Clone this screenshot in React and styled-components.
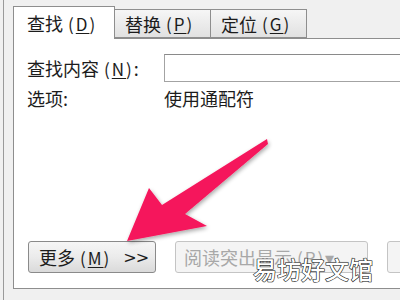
import React from 'react';
import styled, { createGlobalStyle } from 'styled-components';

const Global = createGlobalStyle`
  html, body { margin: 0; padding: 0; }
  body {
    font-family: "Noto Sans CJK SC", "Liberation Sans", sans-serif;
    color: #1c1c1c;
  }
`;

const Screen = styled.div`
  position: relative;
  width: 400px;
  height: 300px;
  overflow: hidden;
  background: #f0f0f0;
  padding-left: 3px;
  box-sizing: border-box;
`;

const Frame = styled.div`
  height: 100%;
  border-left: 1px solid #9a9a9a;
  padding: 5px 0 0 9px;
  box-sizing: border-box;
`;

const TabBar = styled.div`
  display: flex;
  align-items: flex-end;
  height: 33px;
  position: relative;
  z-index: 1;
`;

const Tab = styled.div`
  box-sizing: border-box;
  width: ${p => (p.active ? 102 : 97)}px;
  height: ${p => (p.active ? 33 : 29)}px;
  margin-bottom: ${p => (p.active ? -1 : 0)}px;
  border: 1px solid #8e8e8e;
  border-bottom: ${p => (p.active ? 'none' : '1px solid #8e8e8e')};
  margin-left: ${p => (p.first ? 0 : -1)}px;
  background: ${p => (p.active ? '#fff' : 'linear-gradient(#f6f6f6, #e1e1e1)')};
  display: flex;
  align-items: center;
  padding-left: ${p => (p.active ? 13 : 10)}px;
  font-size: 18px;
  line-height: 1;
  white-space: nowrap;
`;

// the "(D)" access-key part, drawn wider like the old dialog font
const Key = styled.span`
  margin-left: 5px;
  letter-spacing: 2px;
  font-size: 17px;
  u { text-decoration: underline; text-underline-offset: 2px; }
`;

const Panel = styled.div`
  box-sizing: border-box;
  width: 420px;
  height: 251px;
  background: #fff;
  border: 1px solid #8e8e8e;
  padding: 15px 0 15px 13px;
  display: flex;
  flex-direction: column;
`;

const Row = styled.div`
  display: flex;
  align-items: center;
  height: ${p => p.h || 20}px;
  margin-top: ${p => p.mt || 0}px;
  font-size: 18px;
`;

const Label = styled.div`
  width: 137px;
  flex: none;
  white-space: nowrap;
`;

const Input = styled.div`
  flex: 1;
  height: 28px;
  box-sizing: border-box;
  border: 1px solid #a3a3a3;
  border-top-color: #8a8a8a;
`;

const Buttons = styled.div`
  margin-top: auto;
  display: flex;
  gap: 19px;
  padding-left: 1px;
`;

const Button = styled.div`
  box-sizing: border-box;
  flex: none;
  width: ${p => p.w}px;
  height: 32px;
  border: 1px solid ${p => (p.disabled ? '#c4c4c4' : '#8a8a8a')};
  border-radius: 3px;
  background: ${p => (p.disabled ? '#f4f4f4' : 'linear-gradient(#f6f6f6 0%, #ebebeb 50%, #dadada 100%)')};
  color: ${p => (p.disabled ? '#a8a8a8' : '#1c1c1c')};
  display: flex;
  align-items: center;
  padding-left: ${p => p.pl || 10}px;
  font-size: 18px;
  white-space: nowrap;
  overflow: hidden;
`;

const Chevrons = styled.span`
  margin-left: 12px;
  font-family: "DejaVu Sans", sans-serif;
  font-size: 16px;
  letter-spacing: -1px;
`;

const Watermark = styled.div`
  position: absolute;
  left: 253px;
  top: 251px;
  font-size: 24px;
  font-weight: 500;
  color: #fff;
  -webkit-text-stroke: 1px #222;
  paint-order: stroke fill;
  text-shadow: 0 0 1px #000;
  z-index: 3;
`;

const Arrow = styled.svg`
  position: absolute;
  left: 0;
  top: 0;
  width: 400px;
  height: 300px;
  z-index: 2;
  pointer-events: none;
`;

export default function App() {
  return (
    <>
      <Global />
      <Screen>
        <Frame>
          <TabBar>
            <Tab active first>查找<Key>(<u>D</u>)</Key></Tab>
            <Tab>替换<Key>(<u>P</u>)</Key></Tab>
            <Tab>定位<Key>(<u>G</u>)</Key></Tab>
          </TabBar>
          <Panel>
            <Row h={28}>
              <Label>查找内容<Key>(<u>N</u>)</Key>:</Label>
              <Input />
            </Row>
            <Row mt={6}>
              <Label>选项:</Label>
              <span>使用通配符</span>
            </Row>
            <Buttons>
              <Button w={128} pl={10}>
                更多<Key>(<u>M</u>)</Key><Chevrons>&gt;&gt;</Chevrons>
              </Button>
              <Button w={193} pl={8} disabled>阅读突出显示<Key>(<u>R</u>)</Key> ▾</Button>
              <Button w={40} disabled />
            </Buttons>
          </Panel>
        </Frame>
        <Arrow viewBox="0 0 400 300">
          <defs>
            <filter id="sh" x="-20%" y="-20%" width="140%" height="140%">
              <feGaussianBlur in="SourceAlpha" stdDeviation="2" />
              <feOffset dx="1" dy="2" result="b" />
              <feComponentTransfer><feFuncA type="linear" slope="0.35" /></feComponentTransfer>
              <feMerge><feMergeNode /><feMergeNode in="SourceGraphic" /></feMerge>
            </filter>
          </defs>
          <polygon
            points="267,139 162,205 149,188 127,241 207,226 185,214 268,144"
            fill="#f5175b"
            filter="url(#sh)"
          />
        </Arrow>
        <Watermark>易坊好文馆</Watermark>
      </Screen>
    </>
  );
}
